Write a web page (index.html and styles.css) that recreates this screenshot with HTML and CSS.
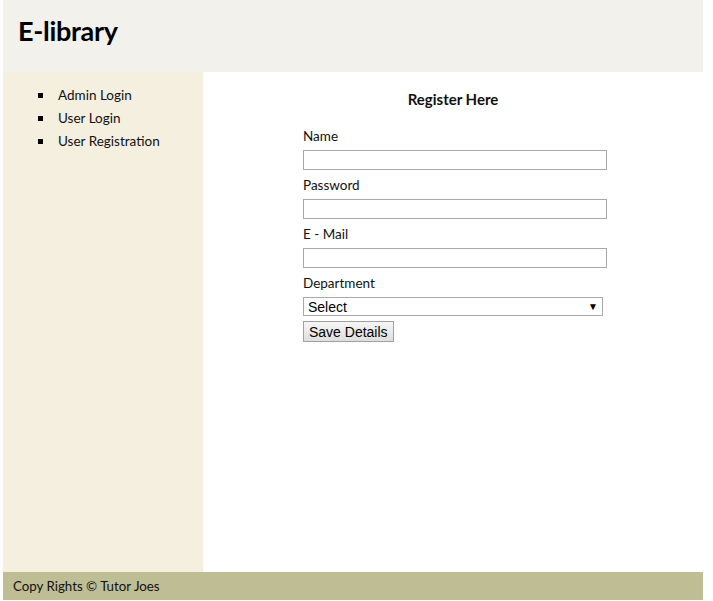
FILE: index.html
```html
<!DOCTYPE html>
<html>
<head>
<meta charset="utf-8">
<title>E-library</title>
<link rel="stylesheet" href="styles.css">
</head>
<body>
<div class="wrap">
  <header class="header"><h1 class="brand">E-library</h1></header>
  <div class="main">
    <aside class="sidebar">
      <ul class="nav">
        <li class="nav-item">Admin Login</li>
        <li class="nav-item">User Login</li>
        <li class="nav-item">User Registration</li>
      </ul>
    </aside>
    <section class="content">
      <h3 class="title">Register Here</h3>
      <form class="form">
        <label class="label">Name</label>
        <input class="field" type="text">
        <label class="label">Password</label>
        <input class="field" type="password">
        <label class="label">E - Mail</label>
        <input class="field" type="text">
        <label class="label">Department</label>
        <div class="select"><span>Select</span><span class="arrow">▼</span></div>
        <button class="btn" type="button">Save Details</button>
      </form>
    </section>
  </div>
  <footer class="footer">Copy Rights © Tutor Joes</footer>
</div>
</body>
</html>
```
FILE: styles.css
```css
html, body { margin: 0; padding: 0; background: #fff; }
body { font-family: Lato, "Open Sans", sans-serif; font-size: 14px; color: #111; }
.wrap { width: 700px; margin-left: 3px; }
.header { height: 72px; background: #f2f1ec; display: flex; align-items: center; padding: 0 0 12px 15px; box-sizing: border-box; }
.brand { margin: 0; font-size: 27px; font-weight: 700; color: #000; letter-spacing: -0.3px; }
.main { display: flex; height: 500px; }
.sidebar { width: 200px; background: #f5efe0; }
.nav { list-style: none; margin: 0; padding: 12px 0 0 35px; font-size: 13.5px; }
.nav-item { height: 23px; line-height: 23px; display: flex; align-items: center; }
.nav-item::before { content: ""; width: 5px; height: 5px; background: #000; margin-right: 15px; flex: none; }
.content { flex: 1; background: #fff; }
.title { margin: 17px 0 0; text-align: center; font-size: 15px; font-weight: 700; line-height: 20px; }
.form { width: 304px; margin: 12px 0 0 100px; display: flex; flex-direction: column; align-items: flex-start; }
.label { height: 29px; box-sizing: border-box; padding-top: 6px; line-height: 18px; font-size: 13.5px; display: block; }
.field { width: 304px; height: 20px; box-sizing: border-box; border: 1px solid #a9a9a9; margin: 0; padding: 0 4px; }
.select { width: 300px; height: 19px; box-sizing: border-box; border: 1px solid #a9a9a9; display: flex; align-items: center; justify-content: space-between; padding: 0 4px 0 4px; font-family: "Liberation Sans", Arial, sans-serif; font-size: 14px; color: #000; }
.arrow { font-size: 10px; }
.btn { margin-top: 5px; height: 21px; padding: 0 5px; font-family: "Liberation Sans", Arial, sans-serif; font-size: 14px; color: #000; background: linear-gradient(#f6f6f6, #dedede); border: 1px solid #a0a0a0; border-radius: 0; }
.footer { height: 28px; background: #bfbd94; padding-left: 10px; line-height: 28px; font-size: 13.3px; color: #111; }
```
